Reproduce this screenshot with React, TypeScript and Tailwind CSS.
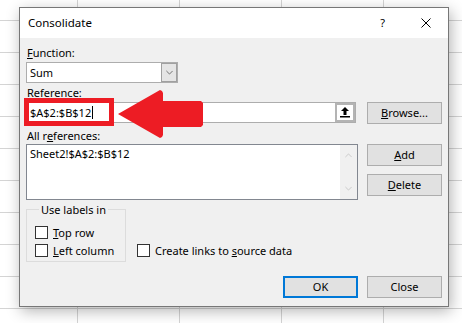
import React from "react";

function Chevron({ up, className }: { up?: boolean; className?: string }) {
  return (
    <svg width="9" height="5" viewBox="0 0 9 5" className={className}>
      <polyline
        points={up ? "0.5,4.5 4.5,0.5 8.5,4.5" : "0.5,0.5 4.5,4.5 8.5,0.5"}
        fill="none"
        stroke="currentColor"
        strokeWidth="1"
      />
    </svg>
  );
}

function Btn({ children, primary }: { children: React.ReactNode; primary?: boolean }) {
  return (
    <div
      className={
        primary
          ? "flex h-[22px] w-[75px] items-center justify-center border-2 border-[#0078d7] bg-[#e1e1e1]"
          : "flex h-[22px] w-[75px] items-center justify-center border border-[#adadad] bg-[#e1e1e1]"
      }
    >
      {children}
    </div>
  );
}

function Check({ children, className }: { children: React.ReactNode; className?: string }) {
  return (
    <div className={"flex h-[18px] items-center " + (className ?? "")}>
      <div className="mr-[5px] h-[13px] w-[13px] border border-[#333] bg-white" />
      <span className="leading-[15px]">{children}</span>
    </div>
  );
}

export default function App() {
  return (
    <div className="relative h-[323px] w-[462px] overflow-hidden bg-white bg-[linear-gradient(to_right,#d4d4d4_1px,transparent_1px),linear-gradient(to_bottom,#d4d4d4_1px,transparent_1px)] bg-[size:102px_32px] bg-[position:77px_20px] pl-[19px] pt-[7px] font-['Noto_Sans',sans-serif] text-[11px] text-black">
      <div className="flex h-[300px] w-[430px] flex-col border border-[#777] bg-[#f0f0f0] shadow-[2px_4px_14px_rgba(0,0,0,0.3)]">
        {/* title bar */}
        <div className="flex h-[30px] items-center bg-white pl-[8px] pr-[17px]">
          <span className="text-[11.5px]">Consolidate</span>
          <span className="ml-auto mr-[36px] text-[11px]">?</span>
          <svg width="10" height="10" viewBox="0 0 10 10">
            <path d="M0.5 0.5 L9.5 9.5 M9.5 0.5 L0.5 9.5" stroke="#000" strokeWidth="1" />
          </svg>
        </div>

        {/* body */}
        <div className="flex flex-col px-[6px]">
          <div className="mt-[7px] h-[15px] pl-[1px] leading-[15px]">
            <u>F</u>unction:
          </div>

          <div className="mt-[2px] flex h-[21px] w-[152px] border border-[#adadad] bg-white">
            <div className="flex flex-1 items-center pl-[3px] leading-[15px]">Sum</div>
            <div className="flex w-[16px] items-center justify-center border border-[#a0a0a0] bg-[#e5e5e5] text-[#555]">
              <Chevron className="w-[7px]" />
            </div>
          </div>

          <div className="mt-[2px] h-[15px] pl-[1px] leading-[15px]">Reference:</div>

          <div className="mt-[2px] flex items-start">
            <div className="flex h-[21px] w-[330px] border border-[#adadad] bg-white">
              <div className="flex flex-1 items-center pl-[3px] leading-[15px]">
                $A$2:$B$12
                <span className="ml-[1px] inline-block h-[13px] w-[1px] bg-black" />
              </div>
              <div className="flex w-[20px] items-center justify-center border-2 border-[#b4b4b4] bg-white">
                <svg width="10" height="11" viewBox="0 0 10 11">
                  <path d="M5 0 L9 4 L6.5 4 L6.5 8 L3.5 8 L3.5 4 L1 4 Z" fill="#000" />
                  <rect x="0" y="9" width="10" height="1.5" fill="#000" />
                </svg>
              </div>
            </div>
            <div className="ml-[11px]">
              <Btn>
                <u>B</u>rowse...
              </Btn>
            </div>
          </div>

          <div className="mt-[4px] h-[15px] pl-[1px] leading-[15px]">
            All r<u>e</u>ferences:
          </div>

          <div className="mt-[1px] flex items-start">
            <div className="flex h-[56px] w-[332px] border border-[#828790] bg-white">
              <div className="flex-1 pl-[3px] pt-[1px] leading-[15px]">Sheet2!$A$2:$B$12</div>
              <div className="flex w-[17px] flex-col items-center justify-between bg-[#f0f0f0] py-[8px] text-[#c0c0c0]">
                <Chevron up className="w-[7px]" />
                <Chevron className="w-[7px]" />
              </div>
            </div>
            <div className="ml-[9px] flex flex-col gap-[8px]">
              <Btn>
                <u>A</u>dd
              </Btn>
              <Btn>
                <u>D</u>elete
              </Btn>
            </div>
          </div>

          <div className="mt-[2px] flex items-end">
            <fieldset className="w-[100px] border border-[#dcdcdc] pb-[2px] pl-[8px]">
              <legend className="ml-[4px] px-[2px] leading-[15px]">Use labels in</legend>
              <div className="pt-[6px]">
                <Check>
                  <u>T</u>op row
                </Check>
                <Check>
                  <u>L</u>eft column
                </Check>
              </div>
            </fieldset>
            <Check className="mb-[3px] ml-[11px]">
              Create links to <u>s</u>ource data
            </Check>
          </div>

          <div className="mt-[14px] flex justify-end gap-[9px]">
            <Btn primary>OK</Btn>
            <Btn>Close</Btn>
          </div>
        </div>
      </div>

      {/* red annotation overlay */}
      <div className="absolute left-[24px] top-[98px] h-[28px] w-[90px] border-[5px] border-[#ed1c24]" />
      <svg className="absolute left-0 top-0" width="462" height="323" viewBox="0 0 462 323">
        <polygon
          points="118,114 160,90 162,91 163,93 163,101 201,101 203,103 203,125 201,127 163,127 163,135 162,137 160,138"
          fill="#ed1c24"
        />
      </svg>
    </div>
  );
}
